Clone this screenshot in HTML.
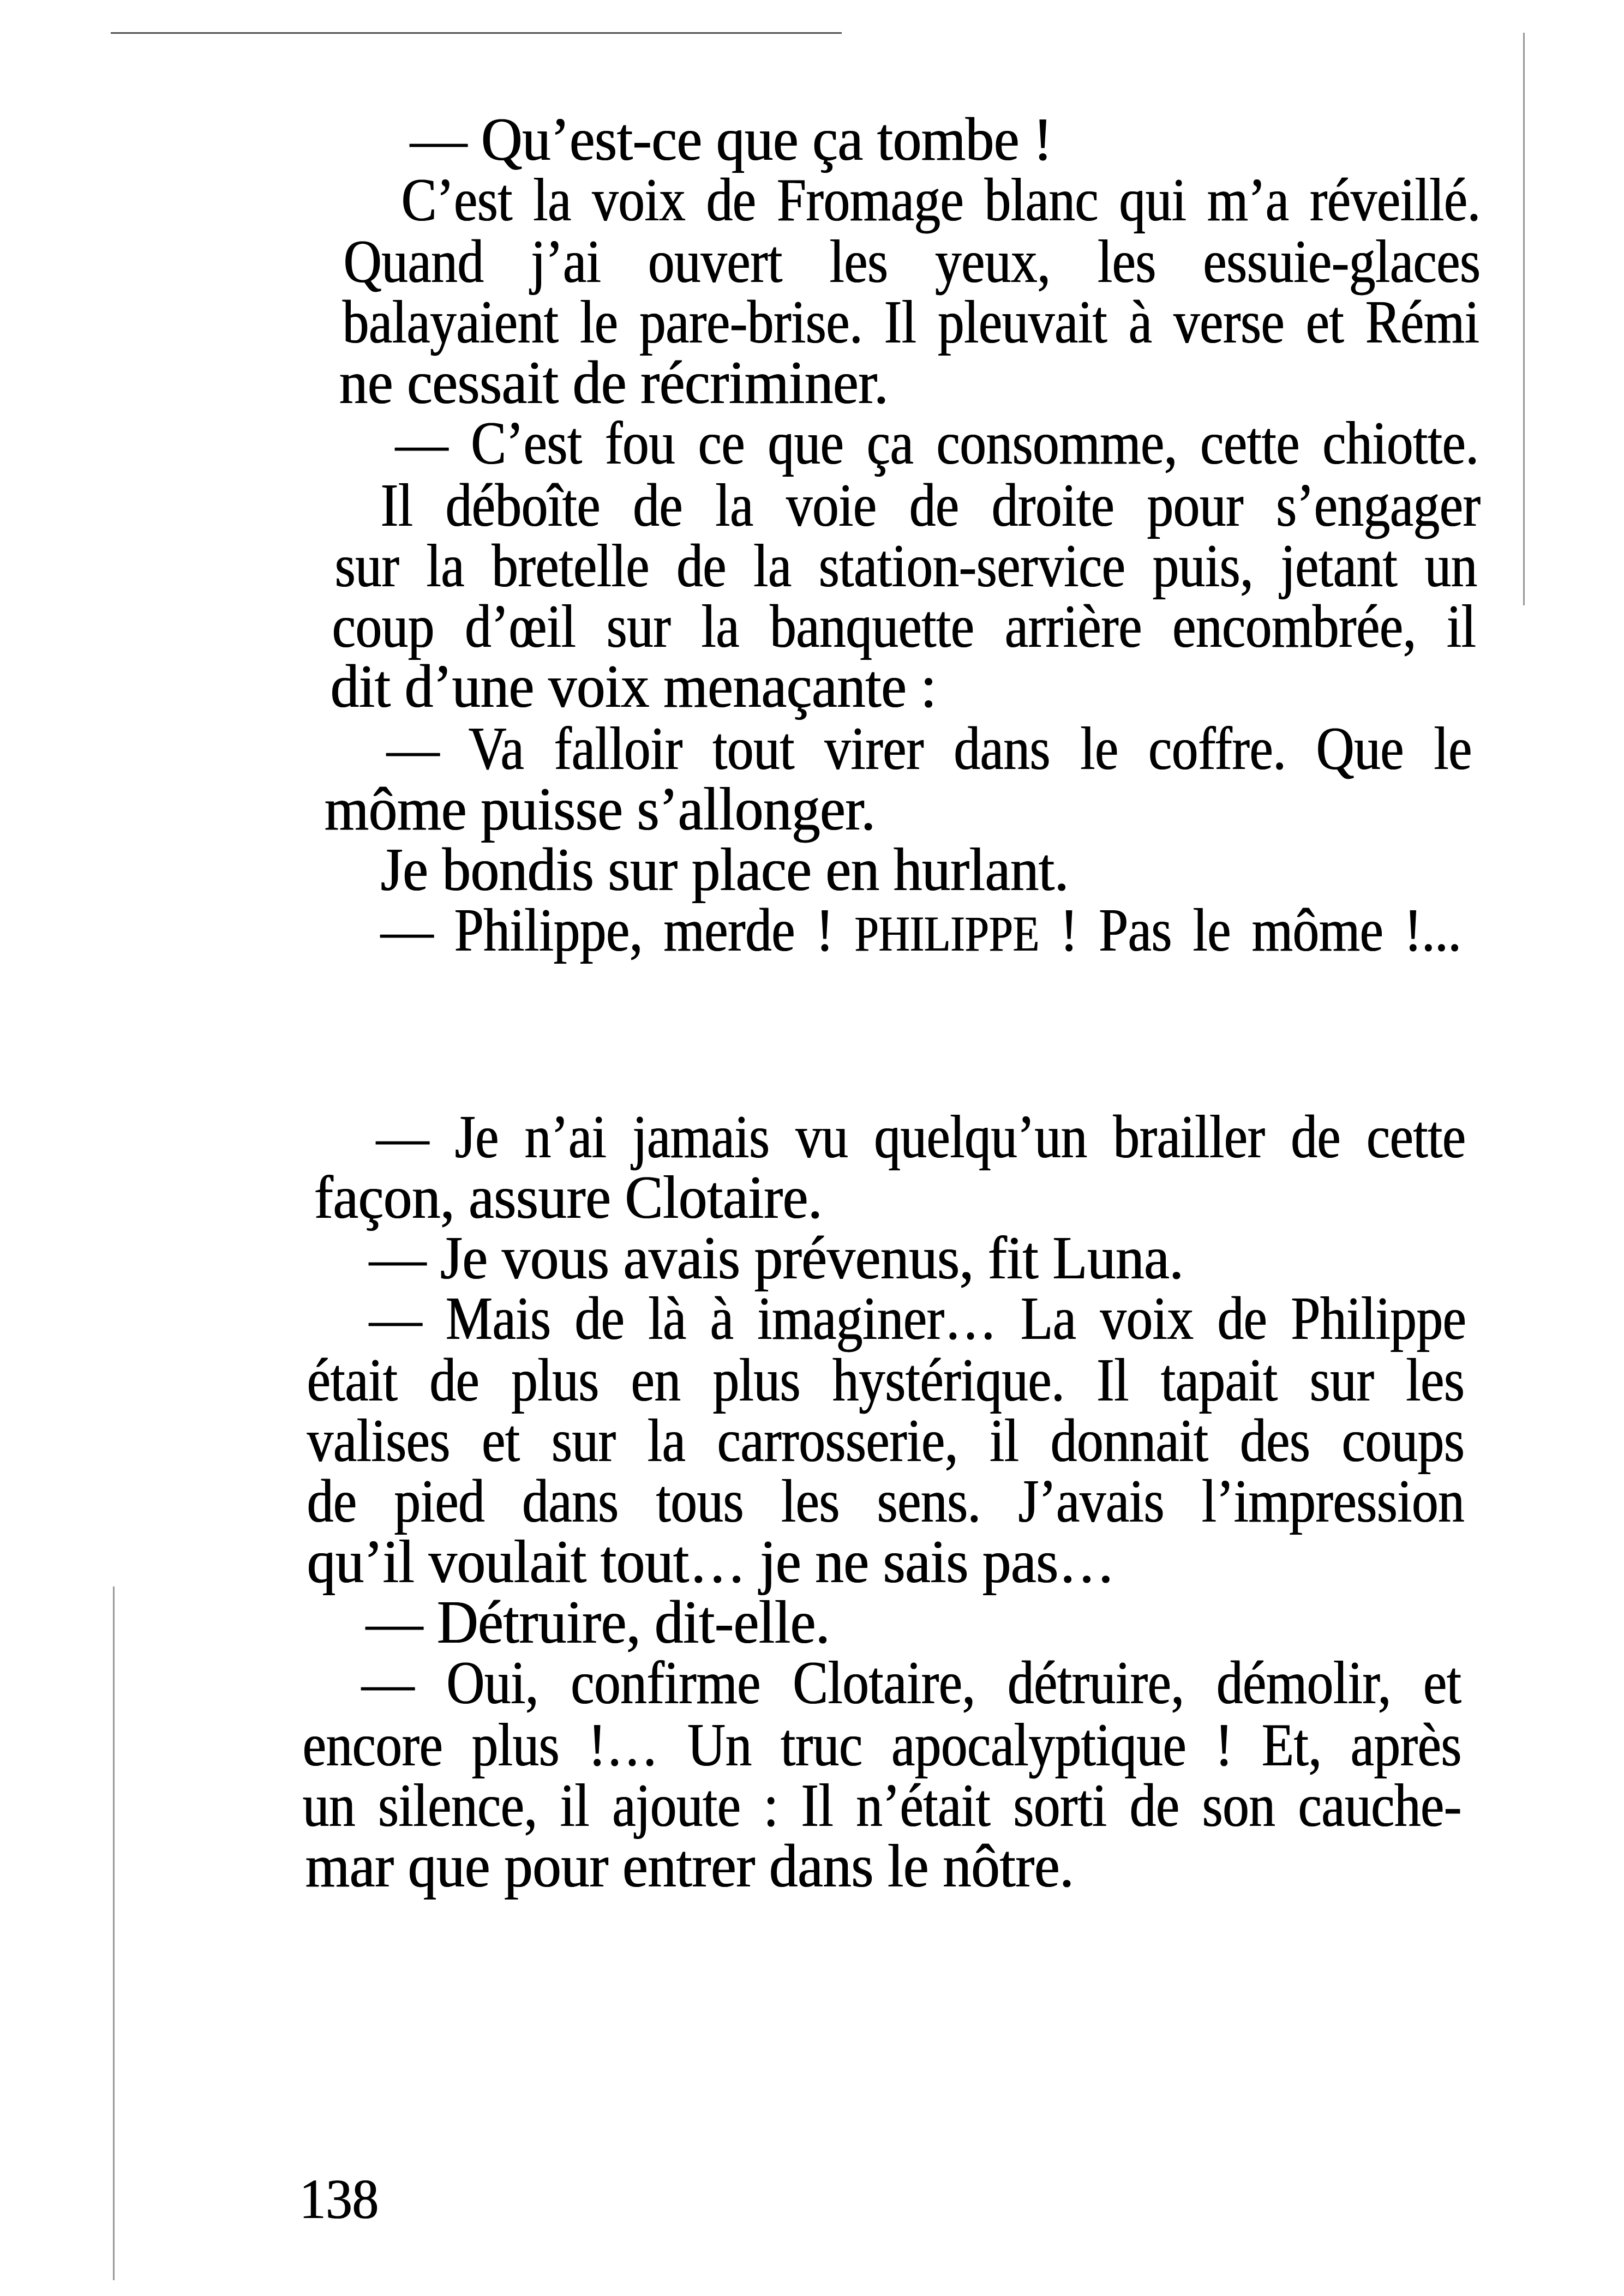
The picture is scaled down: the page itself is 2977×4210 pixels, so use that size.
<!DOCTYPE html>
<html><head><meta charset="utf-8">
<style>
html,body{margin:0;padding:0;background:#fff;}
body{width:2977px;height:4210px;position:relative;overflow:hidden;font-family:"Liberation Serif",serif;color:#000;}
.l{position:absolute;font-size:112px;line-height:112px;white-space:nowrap;transform:scaleX(0.93);transform-origin:0 0;text-shadow:0.8px 0 0 #000,-0.8px 0 0 #000;}
.j{text-align:justify;text-align-last:justify;transform:scaleX(0.86);}
.rule{position:absolute;background:#555;}
</style></head><body>
<div class="rule" style="left:203px;top:59px;width:1340px;height:3px;"></div>
<div class="rule" style="left:2792px;top:60px;width:3px;height:1050px;background:#999;"></div>
<div class="rule" style="left:207px;top:2909px;width:3px;height:1272px;background:#999;"></div>

<div class="l" style="left:752px;top:200px;">— Qu’est-ce que ça tombe !</div>
<div class="l j" style="left:736px;top:311px;width:2300px;">C’est la voix de Fromage blanc qui m’a réveillé.</div>
<div class="l j" style="left:630px;top:424px;width:2423px;">Quand j’ai ouvert les yeux, les essuie-glaces</div>
<div class="l j" style="left:628px;top:535px;width:2423px;">balayaient le pare-brise. Il pleuvait à verse et Rémi</div>
<div class="l" style="left:622px;top:646px;">ne cessait de récriminer.</div>
<div class="l j" style="left:725px;top:757px;width:2309px;">— C’est fou ce que ça consomme, cette chiotte.</div>
<div class="l j" style="left:698px;top:871px;width:2344px;">Il déboîte de la voie de droite pour s’engager</div>
<div class="l j" style="left:614px;top:982px;width:2435px;">sur la bretelle de la station-service puis, jetant un</div>
<div class="l j" style="left:609px;top:1093px;width:2438px;">coup d’œil sur la banquette arrière encombrée, il</div>
<div class="l" style="left:606px;top:1203px;">dit d’une voix menaçante :</div>
<div class="l j" style="left:709px;top:1317px;width:2313px;">— Va falloir tout virer dans le coffre. Que le</div>
<div class="l" style="left:595px;top:1428px;">môme puisse s’allonger.</div>
<div class="l" style="left:698px;top:1539px;">Je bondis sur place en hurlant.</div>
<div class="l j" style="left:698px;top:1650px;width:2303px;">— Philippe, merde ! <span style="font-size:92px">PHILIPPE</span> ! Pas le môme !...</div>

<div class="l j" style="left:690px;top:2029px;width:2322px;">— Je n’ai jamais vu quelqu’un brailler de cette</div>
<div class="l" style="left:576px;top:2140px;">façon, assure Clotaire.</div>
<div class="l" style="left:677px;top:2251px;">— Je vous avais prévenus, fit Luna.</div>
<div class="l j" style="left:677px;top:2362px;width:2338px;">— Mais de là à imaginer… La voix de Philippe</div>
<div class="l j" style="left:563px;top:2475px;width:2467px;">était de plus en plus hystérique. Il tapait sur les</div>
<div class="l j" style="left:563px;top:2586px;width:2467px;">valises et sur la carrosserie, il donnait des coups</div>
<div class="l j" style="left:563px;top:2697px;width:2467px;">de pied dans tous les sens. J’avais l’impression</div>
<div class="l" style="left:563px;top:2808px;">qu’il voulait tout… je ne sais pas…</div>
<div class="l" style="left:671px;top:2919px;">— Détruire, dit-elle.</div>
<div class="l j" style="left:663px;top:3030px;width:2344px;">— Oui, confirme Clotaire, détruire, démolir, et</div>
<div class="l j" style="left:555px;top:3144px;width:2470px;">encore plus !… Un truc apocalyptique ! Et, après</div>
<div class="l j" style="left:555px;top:3255px;width:2470px;">un silence, il ajoute : Il n’était sorti de son cauche-</div>
<div class="l" style="left:560px;top:3366px;">mar que pour entrer dans le nôtre.</div>

<div class="l" style="left:549px;top:3977px;font-size:104px;">138</div>
</body></html>
